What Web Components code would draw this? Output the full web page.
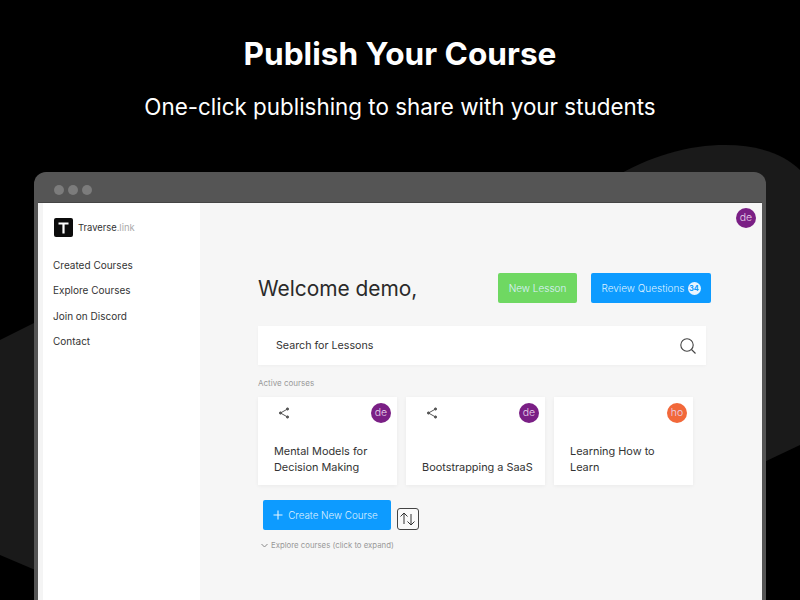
<!DOCTYPE html>
<html>
<head>
<meta charset="utf-8">
<title>Publish Your Course</title>
<style>
    html, body { margin: 0; height: 100%; background: #000; overflow: hidden; }
    body { font-family: "Inter", "Liberation Sans", sans-serif; }
</style>
</head>
<body>
<promo-page>
    <span slot="title">Publish Your Course</span>
    <span slot="subtitle">One-click publishing to share with your students</span>
    <browser-frame>
        <side-bar slot="side"></side-bar>
        <dash-board slot="main"></dash-board>
    </browser-frame>
</promo-page>

<script>
/*
 * SMALL PARTS
 */
class UserBadge extends HTMLElement {
    constructor() {
        super()
        this.attachShadow({ mode: 'open' })
        this.shadowRoot.innerHTML = `
<style>
    :host {
        display: flex;
        width: 20px;
        height: 20px;
        border-radius: 50%;
        align-items: center;
        justify-content: center;
        background: var(--badge, #7a1f85);
        color: #e9d5ec;
        font-size: 10.5px;
        font-weight: 300;
        line-height: 1;
    }
</style>
<slot></slot>`
    }
}
customElements.define('user-badge', UserBadge)

class ActionButton extends HTMLElement {
    constructor() {
        super()
        this.attachShadow({ mode: 'open' })
        this.shadowRoot.innerHTML = `
<style>
    :host {
        display: flex;
        align-items: center;
        justify-content: center;
        height: 30px;
        border-radius: 2px;
        background: var(--fill, #0d9bff);
        color: #dff1ff;
        font-size: 10px;
        font-weight: 300;
        white-space: nowrap;
    }
</style>
<slot></slot>`
    }
}
customElements.define('action-button', ActionButton)

class CourseCard extends HTMLElement {
    constructor() {
        super()
        this.attachShadow({ mode: 'open' })
        const share = this.hasAttribute('shared') ? `
<svg class="share" width="12" height="12" viewBox="0 0 12 12" fill="none" stroke="#555" stroke-width="1">
    <path d="M9.5 2 L2.5 6 L9.5 10"/>
    <circle cx="9.5" cy="2" r="1.1" fill="#555"/>
    <circle cx="2.5" cy="6" r="1.1" fill="#555"/>
    <circle cx="9.5" cy="10" r="1.1" fill="#555"/>
</svg>` : '<span></span>'
        this.shadowRoot.innerHTML = `
<style>
    :host {
        display: flex;
        flex-direction: column;
        box-sizing: border-box;
        width: 139px;
        height: 88px;
        padding: 6px 6px 10px 16px;
        background: #fff;
        box-shadow: 0 1px 4px rgba(0, 0, 0, 0.05);
    }
    .top {
        display: flex;
        justify-content: space-between;
        align-items: flex-start;
    }
    .share { margin: 4px 0 0 4px; }
    .name {
        margin-top: auto;
        font-size: 10.9px;
        line-height: 15.5px;
        color: #333;
    }
</style>
<div class="top">${share}<slot name="owner"></slot></div>
<div class="name"><slot></slot></div>`
    }
}
customElements.define('course-card', CourseCard)

/*
 * SIDEBAR
 */
class SideBar extends HTMLElement {
    constructor() {
        super()
        this.attachShadow({ mode: 'open' })
        this.shadowRoot.innerHTML = `
<style>
    :host {
        display: block;
        box-sizing: border-box;
        width: 162px;
        height: 100%;
        padding: 15px 0 0 10px;
        border-left: 5px solid #f4f4f4;
        background: #fff;
        color: #333;
    }
    .brand {
        display: flex;
        align-items: center;
        gap: 5px;
        margin-left: 1px;
        font-size: 9.4px;
    }
    .logo {
        display: flex;
        width: 19px;
        height: 19px;
        border-radius: 2px;
        background: #0b0b0b;
        align-items: center;
        justify-content: center;
    }
    .tld { color: #aaa; }
    nav {
        display: flex;
        flex-direction: column;
        gap: 10.4px;
        margin-top: 21px;
        font-size: 10px;
        line-height: 15px;
    }
</style>
<div class="brand">
    <div class="logo">
        <svg width="11" height="12" viewBox="0 0 11 12" fill="#fff"><path d="M0.5 0.5 H10.5 V2.6 H6.6 V11.5 H4.4 V2.6 H0.5 Z"/></svg>
    </div>
    <div>Traverse<span class="tld">.link</span></div>
</div>
<nav>
    <div>Created Courses</div>
    <div>Explore Courses</div>
    <div>Join on Discord</div>
    <div>Contact</div>
</nav>`
    }
}
customElements.define('side-bar', SideBar)

/*
 * MAIN PANEL
 */
class DashBoard extends HTMLElement {
    constructor() {
        super()
        this.attachShadow({ mode: 'open' })
        this.shadowRoot.innerHTML = `
<style>
    :host {
        display: block;
        box-sizing: border-box;
        height: 100%;
        padding: 5px 6px 0 58px;
        background: #f6f6f6;
    }
    .account {
        display: flex;
        justify-content: flex-end;
    }
    .welcome {
        display: flex;
        align-items: center;
        margin-top: 45px;
        width: 453px;
    }
    h1 {
        flex: 1;
        margin: 0;
        font-size: 20.9px;
        font-weight: 400;
        color: #2a2a2a;
    }
    .count {
        display: inline-flex;
        width: 13px;
        height: 13px;
        margin-left: 3px;
        border-radius: 50%;
        background: #e8f5ff;
        color: #0d9bff;
        font-size: 7.5px;
        font-weight: 700;
        align-items: center;
        justify-content: center;
    }
    .search {
        display: flex;
        align-items: center;
        justify-content: space-between;
        box-sizing: border-box;
        width: 448px;
        height: 39px;
        margin-top: 23px;
        padding: 0 9px 0 18px;
        background: #fff;
        box-shadow: 0 1px 3px rgba(0, 0, 0, 0.03);
        font-size: 10.7px;
        color: #333;
    }
    .label {
        margin-top: 13px;
        font-size: 8px;
        line-height: 11px;
        color: #999;
    }
    .cards {
        display: flex;
        gap: 9px;
        margin-top: 8px;
    }
    .actions {
        display: flex;
        align-items: flex-end;
        gap: 6px;
        margin: 15px 0 0 5px;
    }
    .create { width: 128px; padding-right: 3px; box-sizing: border-box; font-size: 9.8px; }
    .sort {
        display: flex;
        box-sizing: border-box;
        width: 22px;
        height: 22px;
        border: 1px solid #444;
        border-radius: 3px;
        background: #fafafa;
        align-items: center;
        justify-content: center;
    }
    .explore {
        display: flex;
        align-items: center;
        gap: 3px;
        margin: 10px 0 0 3px;
        font-size: 7.8px;
        line-height: 11px;
        color: #999;
    }
</style>
<div class="account"><user-badge>de</user-badge></div>
<div class="welcome">
    <h1>Welcome demo,</h1>
    <action-button style="--fill:#6fd862;width:79px;margin-right:14px">New Lesson</action-button>
    <action-button style="width:120px">Review Questions<span class="count">34</span></action-button>
</div>
<div class="search">
    <span>Search for Lessons</span>
    <svg width="18" height="18" viewBox="0 0 18 18" fill="none" stroke="#444" stroke-width="1.1">
        <circle cx="8" cy="8" r="6.2"/>
        <path d="M12.5 12.5 L16.5 16.5"/>
    </svg>
</div>
<div class="label">Active courses</div>
<div class="cards">
    <course-card shared><user-badge slot="owner">de</user-badge>Mental Models for Decision Making</course-card>
    <course-card shared><user-badge slot="owner">de</user-badge>Bootstrapping a SaaS</course-card>
    <course-card><user-badge slot="owner" style="--badge:#f2683a">ho</user-badge>Learning How to Learn</course-card>
</div>
<div class="actions">
    <action-button class="create">
        <svg width="10" height="10" viewBox="0 0 10 10" stroke="#e8f5ff" stroke-width="1.1" style="margin-right:5px"><path d="M5 0.5 V9.5 M0.5 5 H9.5"/></svg>
        Create New Course
    </action-button>
    <div class="sort">
        <svg width="18" height="16" viewBox="0 0 18 16" fill="none" stroke="#333" stroke-width="1">
            <path d="M5 13 V2 M1.5 5.5 L5 2 L8.5 5.5"/>
            <path d="M12 3 V14 M8.5 10.5 L12 14 L15.5 10.5"/>
        </svg>
    </div>
</div>
<div class="explore">
    <svg width="7" height="5" viewBox="0 0 7 5" fill="none" stroke="#888" stroke-width="1"><path d="M0.5 1 L3.5 4 L6.5 1"/></svg>
    <span>Explore courses (click to expand)</span>
</div>`
    }
}
customElements.define('dash-board', DashBoard)

/*
 * WINDOW
 */
class BrowserFrame extends HTMLElement {
    constructor() {
        super()
        this.attachShadow({ mode: 'open' })
        this.shadowRoot.innerHTML = `
<style>
    :host {
        display: flex;
        flex-direction: column;
        box-sizing: border-box;
        width: 732px;
        height: 428px;
        margin: 0 auto;
        padding: 0 4px;
        border-radius: 12px 12px 0 0;
        background: #555;
    }
    .bar {
        display: flex;
        align-items: center;
        gap: 4px;
        flex: none;
        height: 31px;
        padding: 5px 0 0 16px;
        box-sizing: border-box;
        border-bottom: 1px solid #444;
    }
    .dot {
        width: 10px;
        height: 10px;
        border-radius: 50%;
        background: #7c7c7c;
    }
    .body {
        display: grid;
        grid-template-columns: 162px 1fr;
        flex: 1;
        min-height: 0;
    }
</style>
<div class="bar"><div class="dot"></div><div class="dot"></div><div class="dot"></div></div>
<div class="body">
    <slot name="side"></slot>
    <slot name="main"></slot>
</div>`
    }
}
customElements.define('browser-frame', BrowserFrame)

/*
 * PAGE
 */
class PromoPage extends HTMLElement {
    constructor() {
        super()
        this.attachShadow({ mode: 'open' })
        this.shadowRoot.innerHTML = `
<style>
    :host {
        display: block;
        position: relative;
        width: 800px;
        height: 600px;
        overflow: hidden;
        background: #000;
        color: #fff;
        font-family: "Inter", "Liberation Sans", sans-serif;
    }
    .blobs {
        position: absolute;
        left: 0;
        top: 0;
    }
    .content {
        position: relative;
    }
    header {
        box-sizing: border-box;
        height: 172px;
        padding-top: 34px;
        text-align: center;
    }
    h1 {
        margin: 0;
        font-size: 31.6px;
        line-height: 40px;
        font-weight: 700;
    }
    p {
        margin: 19px 0 0;
        font-size: 22.4px;
        line-height: 27px;
        font-weight: 400;
    }
</style>
<svg class="blobs" width="800" height="600" fill="#1a1a1a">
    <path d="M610 180 C650 155 690 145 725 145 C760 145 785 155 800 170 V445 L760 464 H610 Z"/>
    <path d="M0 340 L40 320 V572 L0 555 Z"/>
</svg>
<div class="content">
    <header>
        <h1><slot name="title"></slot></h1>
        <p><slot name="subtitle"></slot></p>
    </header>
    <slot></slot>
</div>`
    }
}
customElements.define('promo-page', PromoPage)
</script>
</body>
</html>
